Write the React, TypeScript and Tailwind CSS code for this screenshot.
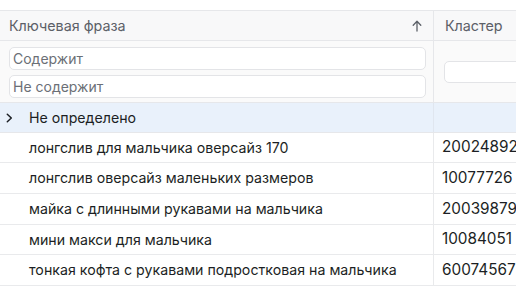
import React from "react";

const rows = [
  ["лонгслив для мальчика оверсайз 170", "20024892"],
  ["лонгслив оверсайз маленьких размеров", "10077726"],
  ["майка с длинными рукавами на мальчика", "20039879"],
  ["мини макси для мальчика", "10084051"],
  ["тонкая кофта с рукавами подростковая на мальчика", "60074567"],
];

const heights = ["h-[30px]", "h-[31px]", "h-[31px]", "h-[30px]", "h-[31px]"];

export default function App() {
  return (
    <div
      className="w-[516px] h-[290px] overflow-hidden bg-white pt-[10px] text-[#1c1f24]"
      style={{ fontFamily: "Inter, 'Noto Sans', sans-serif" }}
    >
      {/* header */}
      <div className="flex h-[31px] border-t border-b border-[#e6e7ea] bg-[#f8f8f9] text-[#5c6068]">
        <div className="w-[434px] shrink-0 flex items-center justify-between pl-[9px] pr-[11px] border-r border-[#e6e7ea]">
          <span className="text-[14.3px]">Ключевая фраза</span>
          <svg width="10" height="12" viewBox="0 0 10 12" fill="none" stroke="#5c6068" strokeWidth="1.3" strokeLinecap="round" strokeLinejoin="round">
            <path d="M5 11V1.5M1.2 5.2L5 1.3l3.8 3.9" />
          </svg>
        </div>
        <div className="flex items-center pl-[11px] text-[14.3px]">Кластер</div>
      </div>
      {/* filters */}
      <div className="flex h-[62px] border-b border-[#e6e7ea] bg-[#fafafa]">
        <div className="w-[434px] shrink-0 flex flex-col gap-[5px] pl-[9px] pr-[7px] pt-[6px] border-r border-[#e6e7ea]">
          <div className="h-[23px] rounded-[5px] border border-[#e3e4e7] bg-white flex items-center pl-[3px] text-[14px] text-[#6b6f76]">
            Содержит
          </div>
          <div className="h-[23px] rounded-[5px] border border-[#e3e4e7] bg-white flex items-center pl-[3px] text-[14px] text-[#6b6f76]">
            Не содержит
          </div>
        </div>
        <div className="flex-1 pl-[10px] pt-[20px]">
          <div className="h-[22px] rounded-[5px] border border-[#e3e4e7] bg-white w-[100px]" />
        </div>
      </div>
      {/* group row */}
      <div className="flex h-[30px] border-b border-[#e6e7ea] bg-[#e9f1fb] text-[14.2px]">
        <div className="w-[434px] shrink-0 flex items-center border-r border-[#e0e6ef]">
          <div className="w-[29px] flex items-center pl-[6px]">
            <svg width="7" height="10" viewBox="0 0 7 10" fill="none" stroke="#1c1f24" strokeWidth="1.5" strokeLinecap="round" strokeLinejoin="round">
              <path d="M1.3 1.2L5.3 5l-4 3.8" />
            </svg>
          </div>
          <span>Не определено</span>
        </div>
        <div className="flex-1" />
      </div>
      {rows.map(([k, c], i) => (
        <div key={i} className={`flex ${heights[i]} border-b border-[#e9eaec]`}>
          <div className="w-[434px] shrink-0 flex items-center pl-[29px] border-r border-[#e9eaec] whitespace-nowrap text-[14.2px]">
            {k}
          </div>
          <div className="flex items-center pl-[8px] whitespace-nowrap text-[15.3px]">{c}</div>
        </div>
      ))}
    </div>
  );
}
